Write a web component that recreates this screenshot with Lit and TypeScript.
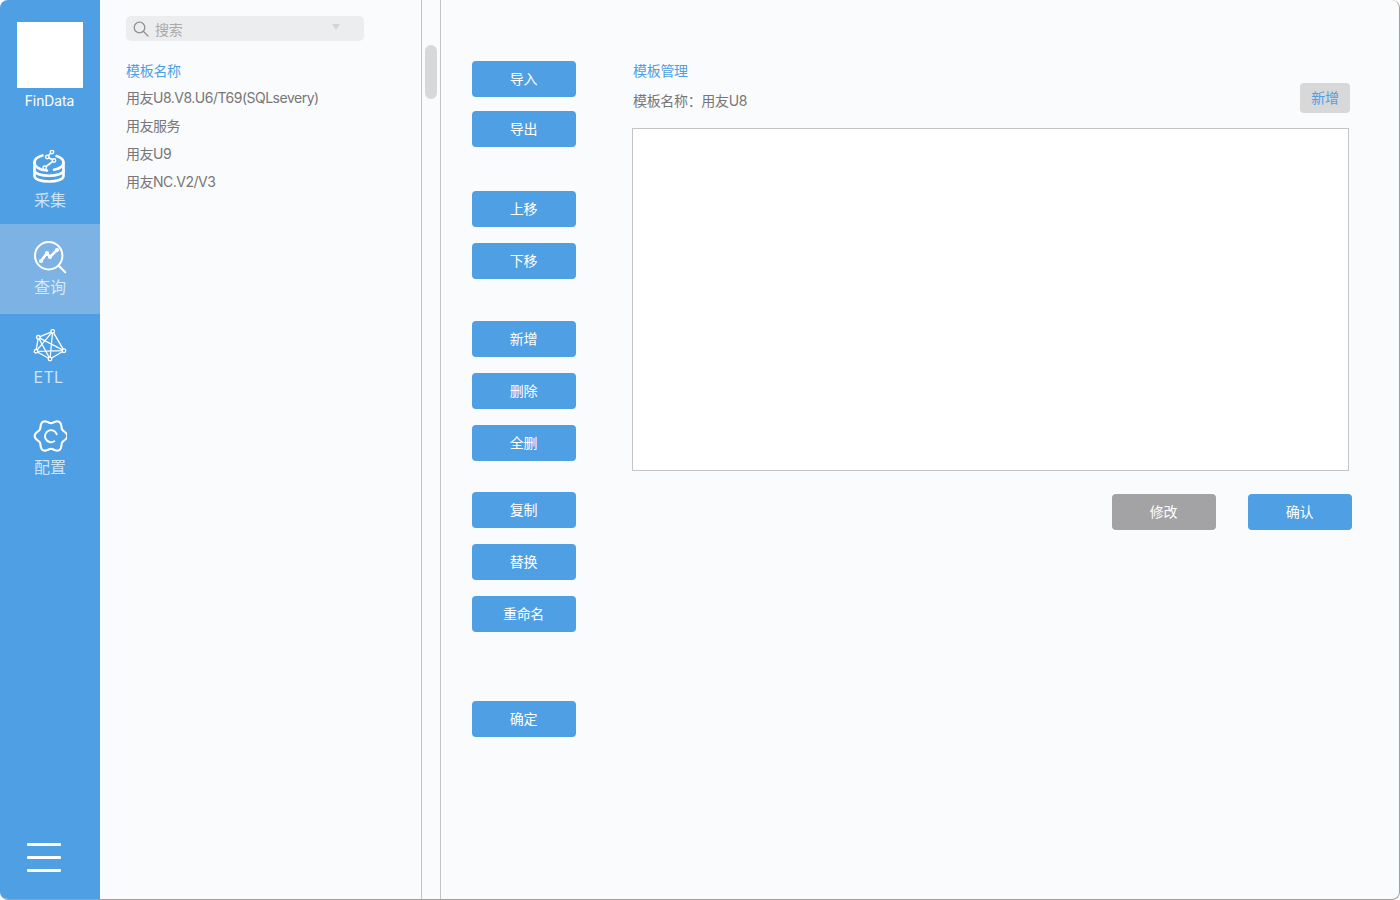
import { LitElement, html, css, svg } from "lit";
import { customElement } from "lit/decorators.js";

const groups: { label: string; top: number }[] = [
  { label: "导入", top: 61 },
  { label: "导出", top: 14 },
  { label: "上移", top: 44 },
  { label: "下移", top: 16 },
  { label: "新增", top: 42 },
  { label: "删除", top: 16 },
  { label: "全删", top: 16 },
  { label: "复制", top: 31 },
  { label: "替换", top: 16 },
  { label: "重命名", top: 16 },
  { label: "确定", top: 69 },
];

function gearPath(cx: number, cy: number): string {
  const pts: string[] = [];
  for (let i = 0; i < 96; i++) {
    const a = (i / 96) * Math.PI * 2;
    const r = 14.6 + 1.7 * Math.cos(6 * a);
    pts.push(`${(cx + r * Math.cos(a)).toFixed(2)} ${(cy + r * Math.sin(a)).toFixed(2)}`);
  }
  return `M${pts.join("L")}Z`;
}

const icons = {
  collect: svg`<svg class="ico" width="34" height="34" viewBox="0 0 34 34" fill="none" stroke="#fff" stroke-width="2.6" stroke-linecap="round" stroke-linejoin="round">
    <path d="M9.500 5.500C4.500 6.800 1.500 9.500 1.500 12.500c0 4.200 5 7.500 12.500 8"/>
    <path d="M23.500 6C27.800 7.300 30.500 9.600 30.500 12.500c0 3.300-3.800 6-9.500 7.300"/>
    <path d="M1.500 12.500V26c0 3.300 6.500 5.500 14.500 5.500S30.500 29.300 30.500 26V12.500"/>
    <path d="M1.500 20.500c0 3 6.500 5.300 14.500 5.300s14.500-2.300 14.500-5.300"/>
    <path d="M11.700 17.700L21 10.500 14.300 7 19 1.500" stroke-width="1.700"/>
    <g stroke-width="1.400" fill="#4f9fe4">
      <circle cx="19" cy="2" r="1.700"/>
      <circle cx="14.300" cy="7" r="1.700"/>
      <circle cx="21" cy="10.500" r="1.700"/>
      <circle cx="11.700" cy="17.700" r="1.700"/>
    </g>
  </svg>`,
  query: svg`<svg class="ico" width="34" height="34" viewBox="0 0 34 34" fill="none" stroke="#fff" stroke-linecap="round" stroke-linejoin="round">
    <circle cx="15.700" cy="15.700" r="13.700" stroke-width="2"/>
    <path d="M25.700 25.700l6.600 6.600" stroke-width="2"/>
    <path d="M8 21l6-8 3 4 7-7" stroke-width="2.600"/>
    <circle cx="8" cy="21" r="2" fill="#fff" stroke="none"/>
    <circle cx="14" cy="13" r="2" fill="#fff" stroke="none"/>
    <circle cx="17" cy="17" r="2" fill="#fff" stroke="none"/>
    <circle cx="24" cy="10" r="2" fill="#fff" stroke="none"/>
  </svg>`,
  etl: svg`<svg class="ico" width="34" height="34" viewBox="0 0 34 34" fill="none" stroke="#fff" stroke-width="1.300" stroke-linejoin="round">
    <path d="M5.300 8.300L19.700 2.300 31 21.700 17 30 3 22.300z"/>
    <path d="M5.300 8.300L17 30M5.300 8.300L31 21.700M19.700 2.300L3 22.300M19.700 2.300L17 30M3 22.300L31 21.700"/>
    <g fill="#4f9fe4">
      <circle cx="5.300" cy="8.300" r="1.800"/>
      <circle cx="19.700" cy="2.300" r="1.800"/>
      <circle cx="31" cy="21.700" r="1.800"/>
      <circle cx="17" cy="30" r="1.800"/>
      <circle cx="3" cy="22.300" r="1.800"/>
    </g>
  </svg>`,
  config: svg`<svg class="ico" width="34" height="34" viewBox="0 0 34 34" fill="none" stroke="#fff" stroke-width="2.100" stroke-linecap="round" stroke-linejoin="round">
    <path d=${gearPath(18, 17)}/>
    <path d="M23.700 15.300A6 6 0 1 0 21.300 22.200" stroke-width="1.900"/>
  </svg>`,
};

@customElement("app-root")
export class AppRoot extends LitElement {
  static styles = css`
    :host {
      display: block;
      width: 1400px;
      height: 900px;
      font-family: "Inter", "Noto Sans CJK SC", sans-serif;
      background: #ffffff;
    }
    .window {
      box-sizing: border-box;
      width: 1400px;
      height: 900px;
      display: flex;
      overflow: hidden;
      border-radius: 8px;
      background: #fafbfd;
      border-right: 1px solid #a0a0a0;
      border-bottom: 1px solid #a0a0a0;
    }
    .side {
      width: 100px;
      flex: none;
      background: #4f9fe4;
      display: flex;
      flex-direction: column;
      align-items: stretch;
    }
    .logo {
      width: 66px;
      height: 66px;
      background: #fff;
      margin: 22px auto 0;
    }
    .brand {
      margin-top: 5px;
      height: 16px;
      line-height: 16px;
      font-size: 13.8px;
      color: #fff;
      text-align: center;
      margin-left: -1px;
    }
    .nav {
      height: 90px;
      display: flex;
      flex-direction: column;
      align-items: center;
      color: rgba(255, 255, 255, 0.72);
      font-size: 16px;
    }
    .nav.first {
      height: 115px;
    }
    .nav.active {
      background: #7cb2e4;
    }
    .nav .ico {
      display: block;
      margin-top: 15px;
    }
    .nav.active .ico {
      margin-top: 16px;
    }
    .nav.first .ico {
      margin-top: 41px;
    }
    .nav .lbl {
      line-height: 20px;
      margin-top: 4px;
    }
    .nav.active .lbl {
      margin-top: 3px;
    }
    .nav.first .lbl {
      margin-top: 6px;
    }
    .nav .lbl.latin {
      margin-left: -3px;
      letter-spacing: 0.3px;
    }
    .spacer {
      flex: 1;
    }
    .burger {
      margin: 0 0 27px 27px;
      width: 34px;
      display: flex;
      flex-direction: column;
      gap: 10px;
    }
    .burger i {
      display: block;
      height: 3px;
      background: #fff;
      border-radius: 1px;
    }
    .list {
      box-sizing: border-box;
      width: 322px;
      flex: none;
      border-right: 1px solid #c4c4c4;
      padding: 16px 0 0 26px;
      font-size: 14px;
      color: #777;
    }
    .search {
      box-sizing: border-box;
      width: 238px;
      height: 25px;
      background: #ecedef;
      border-radius: 5px;
      display: flex;
      align-items: center;
      padding-left: 7px;
      color: #aaa;
      font-size: 14px;
      letter-spacing: -0.3px;
    }
    .search span {
      margin-left: 6px;
      flex: 1;
    }
    .caret {
      width: 0;
      height: 0;
      border-left: 4px solid transparent;
      border-right: 4px solid transparent;
      border-top: 6px solid #d4d5d8;
      margin-right: 24px;
      margin-top: -3px;
    }
    .list .head {
      color: #4f9fe4;
      margin-top: 20px;
      height: 20px;
      line-height: 20px;
      letter-spacing: -0.3px;
    }
    .list .row {
      margin-top: 7px;
      height: 21px;
      line-height: 21px;
      letter-spacing: -0.5px;
    }
    .list .head + .row {
      margin-top: 6px;
    }
    .track {
      box-sizing: border-box;
      width: 19px;
      flex: none;
      border-right: 1px solid #c4c4c4;
      padding: 45px 0 0 3px;
    }
    .thumb {
      width: 12px;
      height: 54px;
      background: #d8d8d8;
      border-radius: 6px;
    }
    .main {
      flex: 1;
      display: flex;
      min-width: 0;
    }
    .tools {
      width: 104px;
      margin-left: 31px;
      flex: none;
      display: flex;
      flex-direction: column;
      align-items: stretch;
    }
    .btn {
      box-sizing: border-box;
      height: 36px;
      width: 104px;
      padding-right: 1px;
      border-radius: 4px;
      background: #4f9fe4;
      color: #fff;
      font-size: 14px;
      letter-spacing: -0.3px;
      text-align: center;
      line-height: 36px;
      flex: none;
    }
    .btn.gray {
      background: #a3a3a5;
    }
    .panel {
      width: 717px;
      margin-left: 56px;
      flex: none;
      display: flex;
      flex-direction: column;
    }
    .title {
      margin-top: 61px;
      padding-left: 1px;
      height: 20px;
      line-height: 20px;
      font-size: 14px;
      letter-spacing: -0.3px;
      color: #4f9fe4;
    }
    .meta {
      margin-top: 2px;
      height: 30px;
      padding-left: 1px;
      display: flex;
      align-items: center;
      justify-content: space-between;
      font-size: 14px;
      color: #777;
    }
    .meta .name {
      margin-top: 4px;
      letter-spacing: -0.33px;
    }
    .add {
      width: 50px;
      height: 30px;
      margin-right: -1px;
      background: #d8d8d8;
      border-radius: 4px;
      color: #4f9fe4;
      text-align: center;
      line-height: 30px;
      font-size: 14px;
      letter-spacing: -0.3px;
    }
    .box {
      box-sizing: border-box;
      margin-top: 15px;
      width: 717px;
      height: 343px;
      background: #fff;
      border: 1px solid #c4c4c4;
    }
    .actions {
      margin-top: 23px;
      width: 720px;
      display: flex;
      justify-content: flex-end;
      gap: 32px;
    }
  `;

  render() {
    return html`
      <div class="window">
        <aside class="side">
          <div class="logo"></div>
          <div class="brand">FinData</div>
          <div class="nav first">${icons.collect}<div class="lbl">采集</div></div>
          <div class="nav active">${icons.query}<div class="lbl">查询</div></div>
          <div class="nav">${icons.etl}<div class="lbl latin">ETL</div></div>
          <div class="nav">${icons.config}<div class="lbl">配置</div></div>
          <div class="spacer"></div>
          <div class="burger"><i></i><i></i><i></i></div>
        </aside>
        <section class="list">
          <div class="search">
            <svg width="16" height="16" viewBox="0 0 16 16" fill="none" stroke="#8f9094" stroke-width="1.300" stroke-linecap="round"><circle cx="6.500" cy="6.500" r="5.300"/><path d="M10.500 10.500l4.500 4.500"/></svg>
            <span>搜索</span>
            <div class="caret"></div>
          </div>
          <div class="head">模板名称</div>
          <div class="row">用友U8.V8.U6/T69(SQLsevery)</div>
          <div class="row">用友服务</div>
          <div class="row">用友U9</div>
          <div class="row">用友NC.V2/V3</div>
        </section>
        <div class="track"><div class="thumb"></div></div>
        <main class="main">
          <div class="tools">
            ${groups.map((g) => html`<div class="btn" style="margin-top:${g.top}px">${g.label}</div>`)}
          </div>
          <div class="panel">
            <div class="title">模板管理</div>
            <div class="meta">
              <div class="name">模板名称：用友U8</div>
              <div class="add">新增</div>
            </div>
            <div class="box"></div>
            <div class="actions">
              <div class="btn gray">修改</div>
              <div class="btn">确认</div>
            </div>
          </div>
        </main>
      </div>
    `;
  }
}
